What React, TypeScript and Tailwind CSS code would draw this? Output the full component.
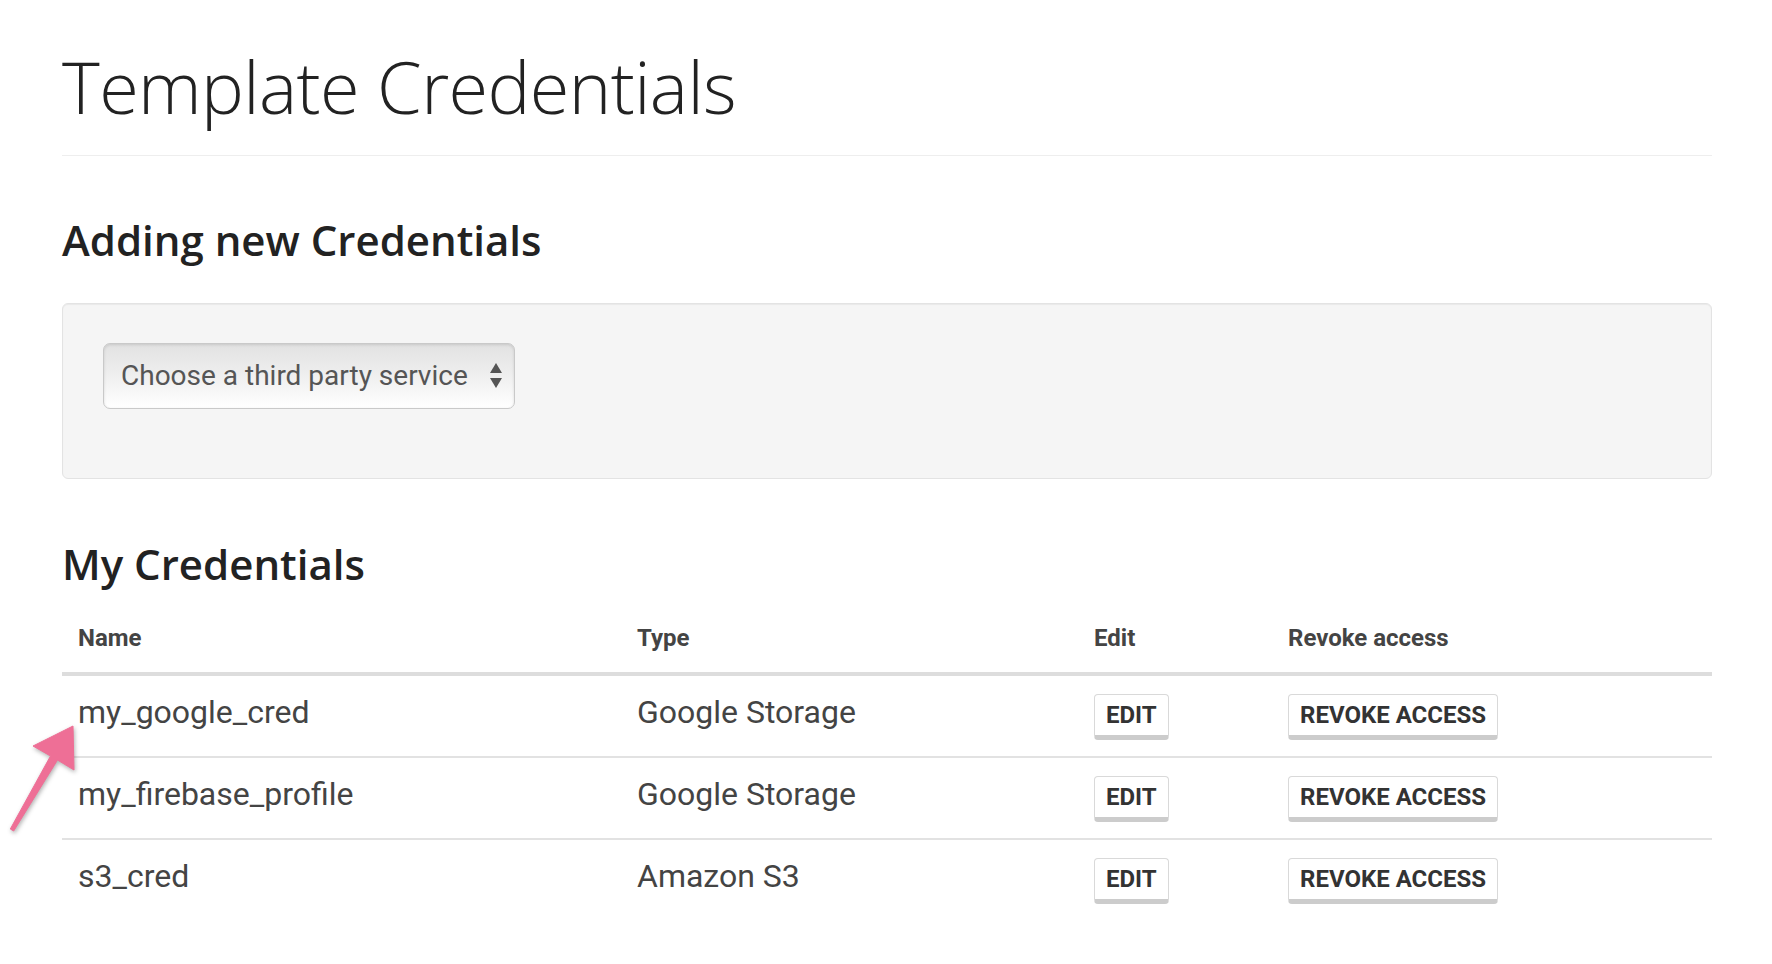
import type { ReactNode } from 'react';

type Credential = {
  name: string;
  type: string;
};

const credentials: Credential[] = [
  { name: 'my_google_cred', type: 'Google Storage' },
  { name: 'my_firebase_profile', type: 'Google Storage' },
  { name: 's3_cred', type: 'Amazon S3' },
];

const cols = 'grid grid-cols-[559px_457px_194px_1fr]';

function Button({ children }: { children: ReactNode }) {
  return (
    <button
      type="button"
      className="-mt-[1px] h-[46px] rounded-[4px] border border-[#d9d9d9] border-b-[5px] border-b-[#cccccc] bg-white px-[11px] text-[24px] font-bold uppercase leading-[40px] text-[#333]"
    >
      {children}
    </button>
  );
}

function SelectArrows() {
  return (
    <svg width="12" height="26" viewBox="0 0 12 26" className="shrink-0 fill-[#555]" aria-hidden="true">
      <path d="M6 0 L12 10 L0 10 Z" />
      <path d="M0 15 L12 15 L6 25 Z" />
    </svg>
  );
}

function PointerArrow() {
  return (
    <svg
      width="100"
      height="150"
      viewBox="0 0 100 150"
      className="pointer-events-none absolute left-0 top-[700px] drop-shadow-[1px_2px_2px_rgba(0,0,0,0.3)]"
      aria-hidden="true"
    >
      <polygon
        points="73,26 74,70 57.5,60 13.7,131 10.3,129 50.5,56 33,46"
        fill="#ee6f96"
        strokeLinejoin="round"
        stroke="#ee6f96"
        strokeWidth="1"
      />
    </svg>
  );
}

export default function App() {
  return (
    <div className="relative min-h-[964px] bg-white pl-[62px] pr-[60px] pt-[46px] font-['Roboto',sans-serif] text-[#444]">
      <header className="border-b border-[#eeeeee] pb-[28px]">
        <h1 className="font-['Open_Sans',sans-serif] text-[72px] font-light leading-[81px] tracking-[-0.6px] text-[#222]">
          Template Credentials
        </h1>
      </header>

      <section className="mt-[59px]">
        <h2 className="font-['Open_Sans',sans-serif] text-[42px] font-semibold leading-[50px] text-[#222]">
          Adding new Credentials
        </h2>
        <div className="mt-[38px] rounded-[6px] border border-[#e3e3e3] bg-[#f5f5f5] pb-[69px] pl-[40px] pt-[39px] shadow-[inset_0_1px_1px_rgba(0,0,0,0.05)]">
          <div className="flex h-[66px] w-[412px] items-center justify-between rounded-[7px] border border-[#c9c9c9] bg-linear-to-b from-[#e2e2e2] via-[#efefef] to-[#ffffff] pl-[17px] pr-[12px] shadow-[inset_0_1px_3px_rgba(0,0,0,0.12)]">
            <span className="text-[28px] leading-[34px] text-[#555]">Choose a third party service</span>
            <SelectArrows />
          </div>
        </div>
      </section>

      <section className="mt-[60px]">
        <h2 className="font-['Open_Sans',sans-serif] text-[42px] font-semibold leading-[50px] text-[#222]">
          My Credentials
        </h2>
        <div className="mt-[17px]">
          <div className={`${cols} border-b-4 border-[#dddddd] text-[24px] font-bold leading-[32px] text-[#444]`}>
            <div className="pb-[18px] pl-[16px] pt-[16px]">Name</div>
            <div className="pb-[18px] pl-[16px] pt-[16px]">Type</div>
            <div className="pb-[18px] pl-[16px] pt-[16px]">Edit</div>
            <div className="pb-[18px] pl-[16px] pt-[16px]">Revoke access</div>
          </div>
          {credentials.map((cred, i) => (
            <div
              key={cred.name}
              className={`${cols} h-[82px] items-start pt-[16px] text-[32px] leading-[40px] text-[#444] ${
                i < credentials.length - 1 ? 'border-b-2 border-[#e2e2e2]' : ''
              }`}
            >
              <div className="pl-[16px]">{cred.name}</div>
              <div className="pl-[16px]">{cred.type}</div>
              <div className="pl-[16px]">
                <Button>Edit</Button>
              </div>
              <div className="pl-[16px]">
                <Button>Revoke access</Button>
              </div>
            </div>
          ))}
        </div>
      </section>

      <PointerArrow />
    </div>
  );
}
